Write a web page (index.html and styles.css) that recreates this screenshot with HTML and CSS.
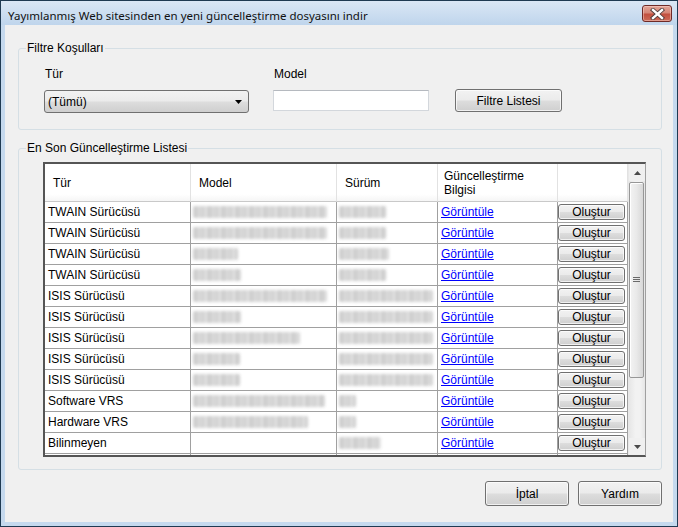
FILE: index.html
```html
<!DOCTYPE html>
<html lang="tr">
<head>
<meta charset="utf-8">
<title>Güncelleştirme</title>
<link rel="stylesheet" href="styles.css">
</head>
<body>
<div class="window">
  <div class="titlebar">
    <span class="title">Yayımlanmış Web sitesinden en yeni güncelleştirme dosyasını indir</span>
    <div class="close">
      <svg width="15" height="12" viewBox="0 0 15 12">
        <path d="M3 2 L12 10 M12 2 L3 10" stroke="#4a3a3a" stroke-width="4.2" stroke-linecap="square"/>
        <path d="M3 2 L12 10 M12 2 L3 10" stroke="#ffffff" stroke-width="2.4" stroke-linecap="square"/>
      </svg>
    </div>
  </div>
  <div class="client">
    <fieldset class="group group-filter">
      <legend>Filtre Koşulları</legend>
      <div class="filter-row">
        <div class="field field-type">
          <span class="label">Tür</span>
          <div class="combo"><span>(Tümü)</span>
            <svg width="7" height="4" viewBox="0 0 7 4"><path d="M0 0 H7 L3.5 4 Z" fill="#000"/></svg>
          </div>
        </div>
        <div class="field field-model">
          <span class="label">Model</span>
          <div class="textbox"></div>
        </div>
        <div class="btn btn-filter">Filtre Listesi</div>
      </div>
    </fieldset>

    <fieldset class="group group-list">
      <legend>En Son Güncelleştirme Listesi</legend>
      <div class="list-wrap">
        <div class="listview">
          <div class="grid">
            <div class="row header">
              <div class="cell">Tür</div>
              <div class="cell">Model</div>
              <div class="cell">Sürüm</div>
              <div class="cell two">Güncelleştirme<br>Bilgisi</div>
              <div class="cell"></div>
            </div>
            <div class="row"><div class="cell">TWAIN Sürücüsü</div><div class="cell"><span class="blur" style="width:134px"></span></div><div class="cell"><span class="blur" style="width:47px"></span></div><div class="cell"><a class="link">Görüntüle</a></div><div class="cell act"><span class="mini">Oluştur</span></div></div>
            <div class="row"><div class="cell">TWAIN Sürücüsü</div><div class="cell"><span class="blur" style="width:134px"></span></div><div class="cell"><span class="blur" style="width:47px"></span></div><div class="cell"><a class="link">Görüntüle</a></div><div class="cell act"><span class="mini">Oluştur</span></div></div>
            <div class="row"><div class="cell">TWAIN Sürücüsü</div><div class="cell"><span class="blur" style="width:45px"></span></div><div class="cell"><span class="blur" style="width:50px"></span></div><div class="cell"><a class="link">Görüntüle</a></div><div class="cell act"><span class="mini">Oluştur</span></div></div>
            <div class="row"><div class="cell">TWAIN Sürücüsü</div><div class="cell"><span class="blur" style="width:48px"></span></div><div class="cell"><span class="blur" style="width:47px"></span></div><div class="cell"><a class="link">Görüntüle</a></div><div class="cell act"><span class="mini">Oluştur</span></div></div>
            <div class="row"><div class="cell">ISIS Sürücüsü</div><div class="cell"><span class="blur" style="width:134px"></span></div><div class="cell"><span class="blur" style="width:94px"></span></div><div class="cell"><a class="link">Görüntüle</a></div><div class="cell act"><span class="mini">Oluştur</span></div></div>
            <div class="row"><div class="cell">ISIS Sürücüsü</div><div class="cell"><span class="blur" style="width:48px"></span></div><div class="cell"><span class="blur" style="width:94px"></span></div><div class="cell"><a class="link">Görüntüle</a></div><div class="cell act"><span class="mini">Oluştur</span></div></div>
            <div class="row"><div class="cell">ISIS Sürücüsü</div><div class="cell"><span class="blur" style="width:107px"></span></div><div class="cell"><span class="blur" style="width:94px"></span></div><div class="cell"><a class="link">Görüntüle</a></div><div class="cell act"><span class="mini">Oluştur</span></div></div>
            <div class="row"><div class="cell">ISIS Sürücüsü</div><div class="cell"><span class="blur" style="width:47px"></span></div><div class="cell"><span class="blur" style="width:94px"></span></div><div class="cell"><a class="link">Görüntüle</a></div><div class="cell act"><span class="mini">Oluştur</span></div></div>
            <div class="row"><div class="cell">ISIS Sürücüsü</div><div class="cell"><span class="blur" style="width:47px"></span></div><div class="cell"><span class="blur" style="width:94px"></span></div><div class="cell"><a class="link">Görüntüle</a></div><div class="cell act"><span class="mini">Oluştur</span></div></div>
            <div class="row"><div class="cell">Software VRS</div><div class="cell"><span class="blur" style="width:132px"></span></div><div class="cell"><span class="blur" style="width:17px"></span></div><div class="cell"><a class="link">Görüntüle</a></div><div class="cell act"><span class="mini">Oluştur</span></div></div>
            <div class="row"><div class="cell">Hardware VRS</div><div class="cell"><span class="blur" style="width:115px"></span></div><div class="cell"><span class="blur" style="width:17px"></span></div><div class="cell"><a class="link">Görüntüle</a></div><div class="cell act"><span class="mini">Oluştur</span></div></div>
            <div class="row"><div class="cell">Bilinmeyen</div><div class="cell"></div><div class="cell"><span class="blur" style="width:42px"></span></div><div class="cell"><a class="link">Görüntüle</a></div><div class="cell act"><span class="mini">Oluştur</span></div></div>
            <div class="row"><div class="cell"></div><div class="cell"></div><div class="cell"></div><div class="cell"></div><div class="cell act"><span class="mini"></span></div></div>
          </div>
          <div class="scrollbar">
            <div class="sb-arrow"><svg width="7" height="4" viewBox="0 0 7 4"><path d="M0 4 H7 L3.5 0 Z" fill="#4a4a4a"/></svg></div>
            <div class="sb-track">
              <div class="sb-thumb">
                <svg width="7" height="6" viewBox="0 0 7 6"><path d="M0 0.5 H7 M0 2.5 H7 M0 4.5 H7" stroke="#6a6a6a" stroke-width="1"/></svg>
              </div>
            </div>
            <div class="sb-arrow"><svg width="7" height="4" viewBox="0 0 7 4"><path d="M0 0 H7 L3.5 4 Z" fill="#4a4a4a"/></svg></div>
          </div>
        </div>
      </div>
    </fieldset>

    <div class="footer">
      <div class="btn btn-dlg">İptal</div>
      <div class="btn btn-dlg">Yardım</div>
    </div>
  </div>
</div>
</body>
</html>
```

FILE: styles.css
```css
html, body {
  margin: 0;
  padding: 0;
}

body {
  font-family: "Liberation Sans", Arial, sans-serif;
  font-size: 12px;
  color: #000;
  background: #c5d9ee;
}

.window {
  width: 678px;
  height: 527px;
  box-sizing: border-box;
  border: 1px solid #1f3a52;
  background: #c5d9ee;
  padding: 0 4px 4px 4px;
  display: flex;
  flex-direction: column;
}

.titlebar {
  height: 24px;
  flex: none;
  display: flex;
  align-items: flex-start;
  justify-content: space-between;
  background: linear-gradient(#dae7f5, #bfd5ec);
  margin: 0 -4px;
  padding: 0 5px 0 7px;
}

.title {
  font-family: "Noto Sans", "DejaVu Sans", sans-serif;
  font-size: 11.5px;
  line-height: 16px;
  padding-top: 7px;
  color: #111;
}

.close {
  margin-top: 4px;
  width: 30px;
  height: 17px;
  box-sizing: border-box;
  border: 1px solid #6e2a27;
  border-radius: 3px;
  background: linear-gradient(#e3a598 0%, #d58677 45%, #c2503f 55%, #cc6b58 100%);
  display: flex;
  align-items: center;
  justify-content: center;
  box-shadow: inset 0 0 0 1px rgba(255, 220, 210, 0.45);
}

.client {
  flex: 1;
  background: #f0f0f0;
  padding: 16px 11px 0 13px;
  display: flex;
  flex-direction: column;
}

.group {
  margin: 0;
  padding: 0;
  border: 1px solid #d5dfe5;
  border-radius: 3px;
  min-width: 0;
}

.group legend {
  margin-left: 7px;
  padding: 0 1px;
  font-size: 12px;
  line-height: 14px;
}

.group-filter {
  height: 89px;
  box-sizing: border-box;
}

.filter-row {
  display: flex;
  align-items: flex-start;
  padding: 12px 0 0 25px;
}

.field {
  display: flex;
  flex-direction: column;
}

.label {
  line-height: 14px;
  padding-left: 1px;
  margin-bottom: 9px;
}

.field-type {
  width: 205px;
}

.field-model {
  width: 156px;
  margin-left: 24px;
}

.combo {
  height: 23px;
  box-sizing: border-box;
  border: 1px solid #707070;
  border-radius: 3px;
  background: linear-gradient(#f2f2f2 0%, #ebebeb 48%, #dddddd 52%, #cfcfcf 100%);
  display: flex;
  align-items: center;
  justify-content: space-between;
  padding: 0 6px 0 3px;
}

.textbox {
  height: 21px;
  box-sizing: border-box;
  border: 1px solid #d3d7dc;
  border-top-color: #b5b9bf;
  background: #fff;
}

.btn {
  box-sizing: border-box;
  border: 1px solid #707070;
  border-radius: 3px;
  background: linear-gradient(#f2f2f2 0%, #ebebeb 48%, #dddddd 52%, #cfcfcf 100%);
  box-shadow: inset 0 0 0 1px rgba(255, 255, 255, 0.7);
  display: flex;
  align-items: center;
  justify-content: center;
}

.btn-filter {
  width: 107px;
  height: 23px;
  margin-left: 26px;
  margin-top: 22px;
}

.group-list {
  margin-top: 11px;
  height: 329px;
  box-sizing: border-box;
}

.list-wrap {
  padding: 7px 0 0 24px;
}

.listview {
  width: 603px;
  height: 295px;
  box-sizing: border-box;
  border: 2px solid #555555;
  border-right: 1px solid #a0a0a0;
  background: #fff;
  display: flex;
  overflow: hidden;
}

.grid {
  width: 583px;
  flex: none;
  overflow: hidden;
}

.row {
  display: grid;
  grid-template-columns: 146px 146px 101px 120px 70px;
  height: 21px;
}

.cell {
  box-sizing: border-box;
  border-right: 1px solid #a0a0a0;
  border-bottom: 1px solid #a0a0a0;
  line-height: 20px;
  padding-left: 3px;
  white-space: nowrap;
  overflow: hidden;
  display: flex;
  align-items: center;
}

.row.header {
  height: 38px;
  background: linear-gradient(#ffffff 0%, #ffffff 80%, #f4f4f4 100%);
}

.row.header .cell {
  border-right-color: #e2e2e2;
  border-bottom-color: #c9c9c9;
  padding-left: 8px;
  line-height: 14px;
}

.row.header .cell.two {
  padding-left: 6px;
}

.blur {
  display: inline-block;
  height: 12px;
  margin-left: -1px;
  border-radius: 2px;
  background: repeating-linear-gradient(90deg, #c6c6c6 0 5px, #d8d8d8 5px 7px, #cdcdcd 7px 12px, #e0e0e0 12px 14px);
  filter: blur(1.8px);
  opacity: 0.85;
}

.link {
  color: #0000ff;
  text-decoration: underline;
}

.cell.act {
  padding: 0;
  align-items: flex-start;
}

.mini {
  margin-top: 2px;
  width: 67px;
  height: 16px;
  box-sizing: border-box;
  border: 1px solid #707070;
  border-radius: 3px;
  background: linear-gradient(#f2f2f2 0%, #ebebeb 48%, #dddddd 52%, #cfcfcf 100%);
  box-shadow: inset 0 0 0 1px rgba(255, 255, 255, 0.7);
  display: flex;
  align-items: center;
  justify-content: center;
  line-height: 14px;
}

.scrollbar {
  width: 17px;
  flex: none;
  background: #f0f0f0;
  display: flex;
  flex-direction: column;
  border-left: 1px solid #e8e8e8;
  box-sizing: border-box;
}

.sb-arrow {
  height: 17px;
  flex: none;
  display: flex;
  align-items: center;
  justify-content: center;
}

.sb-track {
  flex: 1;
  padding-top: 1px;
  background: linear-gradient(90deg, #e6e6e6, #f2f2f2 40%, #f2f2f2 70%, #e6e6e6);
}

.sb-thumb {
  width: 15px;
  height: 196px;
  box-sizing: border-box;
  border: 1px solid #979797;
  border-radius: 2px;
  background: linear-gradient(90deg, #f3f3f3 0%, #e9e9e9 50%, #d8d8d8 100%);
  box-shadow: inset 1px 1px 0 #fff;
  display: flex;
  align-items: center;
  justify-content: center;
}

.footer {
  display: flex;
  justify-content: flex-end;
  margin-top: 11px;
}

.btn-dlg {
  width: 84px;
  height: 25px;
  margin-left: 9px;
}
```
